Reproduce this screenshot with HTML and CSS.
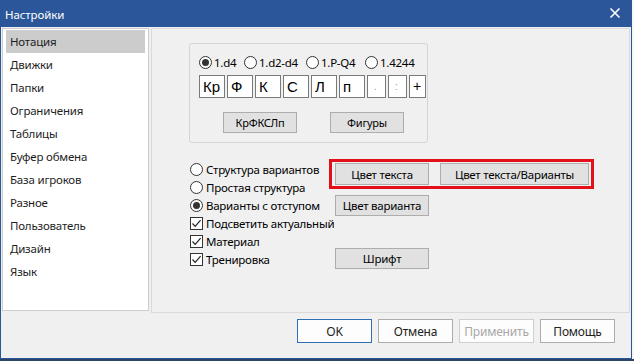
FILE: index.html
```html
<!DOCTYPE html>
<html lang="ru">
<head>
<meta charset="utf-8">
<link rel="stylesheet" href="styles.css">
</head>
<body>
<div class="window">
  <div class="titlebar">
    <span class="title">Настройки</span>
    <svg class="close" width="12" height="12" viewBox="0 0 12 12"><path d="M1.5 1.5 L10.5 10.5 M10.5 1.5 L1.5 10.5" stroke="#fff" stroke-width="1.6" fill="none"/></svg>
  </div>
  <div class="content">
    <div class="nav">
      <div class="nav-item selected">Нотация</div>
      <div class="nav-item">Движки</div>
      <div class="nav-item">Папки</div>
      <div class="nav-item">Ограничения</div>
      <div class="nav-item">Таблицы</div>
      <div class="nav-item">Буфер обмена</div>
      <div class="nav-item">База игроков</div>
      <div class="nav-item">Разное</div>
      <div class="nav-item">Пользователь</div>
      <div class="nav-item">Дизайн</div>
      <div class="nav-item">Язык</div>
    </div>
    <div class="panel">
      <div class="group">
        <div class="radio-row">
          <label class="ritem w1"><span class="radio checked"></span>1.d4</label>
          <label class="ritem w2"><span class="radio"></span>1.d2-d4</label>
          <label class="ritem w3"><span class="radio"></span>1.P-Q4</label>
          <label class="ritem"><span class="radio"></span>1.4244</label>
        </div>
        <div class="boxes">
          <span class="box">Кр</span>
          <span class="box">Ф</span>
          <span class="box">К</span>
          <span class="box">С</span>
          <span class="box">Л</span>
          <span class="box">п</span>
          <span class="box narrow faint">.</span>
          <span class="box narrow faint">:</span>
          <span class="box narrow2">+</span>
        </div>
        <div class="group-buttons">
          <button class="btn gbtn">КрФКСЛп</button>
          <button class="btn gbtn">Фигуры</button>
        </div>
      </div>
      <div class="lower">
        <div class="options">
          <div class="opt"><span class="radio"></span>Структура вариантов</div>
          <div class="opt"><span class="radio"></span>Простая структура</div>
          <div class="opt"><span class="radio checked"></span>Варианты с отступом</div>
          <div class="opt"><span class="check"><svg width="11" height="11" viewBox="0 0 11 11"><path d="M1.5 5.5 L4.2 8.3 L9.6 2.2" stroke="#222" stroke-width="1.2" fill="none"/></svg></span>Подсветить актуальный</div>
          <div class="opt"><span class="check"><svg width="11" height="11" viewBox="0 0 11 11"><path d="M1.5 5.5 L4.2 8.3 L9.6 2.2" stroke="#222" stroke-width="1.2" fill="none"/></svg></span>Материал</div>
          <div class="opt"><span class="check"><svg width="11" height="11" viewBox="0 0 11 11"><path d="M1.5 5.5 L4.2 8.3 L9.6 2.2" stroke="#222" stroke-width="1.2" fill="none"/></svg></span>Тренировка</div>
        </div>
        <div class="actions">
          <div class="highlight">
            <button class="btn color">Цвет текста</button>
            <button class="btn color wide">Цвет текста/Варианты</button>
          </div>
          <button class="btn color single">Цвет варианта</button>
          <button class="btn color single font">Шрифт</button>
        </div>
      </div>
    </div>
  </div>
  <div class="footer">
    <button class="fbtn default">OK</button>
    <button class="fbtn">Отмена</button>
    <button class="fbtn disabled">Применить</button>
    <button class="fbtn">Помощь</button>
  </div>
</div>
<div class="taskbar"></div>
</body>
</html>
```

FILE: styles.css
```css
* { box-sizing: border-box; }
html, body { margin: 0; padding: 0; }
body {
  width: 634px;
  height: 361px;
  overflow: hidden;
  background: #f4f6f8;
  font-family: "Noto Sans", "Liberation Sans", sans-serif;
  font-size: 11.5px;
  letter-spacing: -0.25px;
  color: #000;
}
.window {
  width: 632px;
  height: 359px;
  background: #f0f0f0;
  border: 1px solid #2b579a;
  border-top: none;
  display: flex;
  flex-direction: column;
}
.titlebar {
  height: 27px;
  background: #2b579a;
  color: #fff;
  display: flex;
  align-items: center;
  justify-content: space-between;
  padding: 2px 10px 0 4px;
  flex: none;
  letter-spacing: -0.1px;
}
.title { font-size: 11.5px; }
.close { display: block; margin-top: -3px; }
.content {
  display: flex;
  padding: 1px 0 0 1px;
  height: 286px;
  flex: none;
}
.nav {
  width: 147px;
  height: 283px;
  background: #fff;
  border: 1px solid #cdcdcd;
  padding: 1px 3px 0 3px;
}
.nav-item {
  height: 23px;
  line-height: 23px;
  padding-left: 4px;
  color: #1e1e1e;
  font-size: 11.5px;
  letter-spacing: -0.2px;
}
.nav-item.selected { background: #cccccc; }
.panel {
  margin-left: 2px;
  width: 479px;
  height: 285px;
  border: 1px solid #dadada;
  padding: 14px 0 0 37px;
}
.group {
  width: 239px;
  height: 100px;
  border: 1px solid #d5d5d5;
  border-radius: 3px;
  padding: 12px 0 0 9px;
}
.radio-row { display: flex; height: 13px; align-items: center; }
.ritem { display: flex; align-items: center; gap: 2px; white-space: nowrap; }
.w1 { width: 45px; }
.w2 { width: 62px; }
.w3 { width: 59px; }
.radio {
  width: 13px;
  height: 13px;
  border: 1px solid #333;
  border-radius: 50%;
  background: #fff;
  display: inline-flex;
  align-items: center;
  justify-content: center;
  flex: none;
}
.radio.checked::after {
  content: "";
  width: 7px;
  height: 7px;
  border-radius: 50%;
  background: #333;
}
.boxes { display: flex; gap: 2px; margin-top: 6px; }
.box {
  width: 26px;
  height: 23px;
  background: #fff;
  border: 1px solid #7a7a7a;
  font-family: "Liberation Sans", sans-serif;
  font-size: 15px;
  letter-spacing: 0;
  line-height: 21px;
  padding-left: 3px;
}
.box.narrow { width: 19px; }
.box.narrow2 { width: 17px; font-size: 14px; }
.box.faint { color: #9a9a9a; font-size: 10px; padding-left: 6px; }
.group-buttons { display: flex; gap: 33px; margin-top: 14px; padding-left: 24px; }
.btn {
  font-family: "Noto Sans", "Liberation Sans", sans-serif;
  font-size: 11.5px;
  letter-spacing: -0.25px;
  color: #000;
  background: #e1e1e1;
  border: 1px solid #adadad;
  padding: 0;
  margin: 0;
}
.gbtn { width: 74px; height: 21px; font-size: 11px; }
.lower { display: flex; margin-top: 16px; align-items: flex-start; }
.options { width: 139px; margin-top: 1px; margin-left: 1px; }
.opt {
  height: 18px;
  display: flex;
  align-items: center;
  gap: 3px;
  white-space: nowrap;
}
.check {
  width: 13px;
  height: 13px;
  border: 1px solid #333;
  background: #fff;
  display: inline-flex;
  align-items: center;
  justify-content: center;
  flex: none;
}
.check svg { display: block; }
.actions { display: flex; flex-direction: column; align-items: flex-start; }
.highlight {
  display: flex;
  gap: 11px;
  border: 3px solid #e3101a;
  padding: 1px 2px 1px 3px;
}
.color { width: 94px; height: 22px; }
.color.wide { width: 149px; }
.single { height: 21px; margin-left: 6px; margin-top: 6px; }
.single.font { margin-top: 32px; }
.footer {
  flex: 1;
  display: flex;
  justify-content: flex-end;
  gap: 6px;
  padding: 6px 16px 0 0;
}
.fbtn {
  width: 75px;
  height: 24px;
  background: #fdfdfd;
  border: 1px solid #adadad;
  font-family: "Noto Sans", "Liberation Sans", sans-serif;
  font-size: 12px;
  letter-spacing: -0.2px;
  color: #222;
  padding: 0;
  margin: 0;
}
.fbtn.default { border-color: #2f6fb6; }
.fbtn.disabled { color: #a8a8a8; border-color: #cfcfcf; }
.taskbar { height: 2px; background: #2c4466; width: 634px; }
```
